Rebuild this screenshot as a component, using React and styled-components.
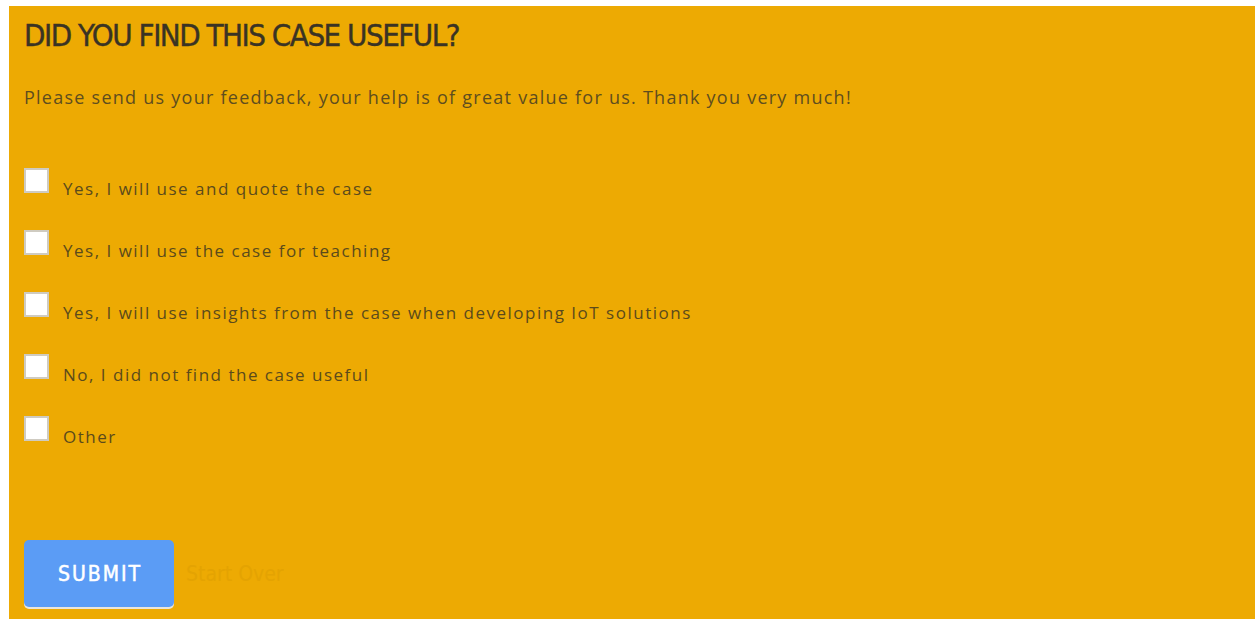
import React from "react";
import styled, { createGlobalStyle } from "styled-components";

const Global = createGlobalStyle`
  html, body { margin: 0; padding: 0; background: #ffffff; }
  body { overflow: hidden; }
  * { box-sizing: border-box; }
`;

const Panel = styled.section`
  margin: 6px 0 0 9px;
  min-height: 700px;
  background: #edaa03;
  padding: 11px 15px 0 15px;
  font-family: "Open Sans", "Liberation Sans", sans-serif;
`;

const Title = styled.h2`
  margin: 0;
  font-family: "DejaVu Sans", sans-serif;
  font-stretch: condensed;
  font-weight: 400;
  font-size: 31px;
  line-height: 37px;
  letter-spacing: -1.5px;
  color: #3a3324;
  -webkit-text-stroke: 0.4px #3a3324;
`;

const Intro = styled.p`
  margin: 32px 0 0 0;
  font-size: 18px;
  line-height: 22px;
  letter-spacing: 1.25px;
  color: #5e4d1f;
`;

const Options = styled.div`
  margin-top: 60px;
  display: flex;
  flex-direction: column;
  gap: 30px;
`;

const Option = styled.label`
  display: flex;
  align-items: flex-start;
  gap: 14px;
  cursor: pointer;
`;

const Box = styled.input.attrs({ type: "checkbox" })`
  appearance: none;
  margin: 0;
  width: 25px;
  height: 25px;
  flex: none;
  background: #ffffff;
  border: 2px solid #cfcbc1;
`;

const LabelText = styled.span`
  margin-top: 10px;
  font-size: 17px;
  line-height: 22px;
  letter-spacing: 1.5px;
  color: #5b4a1c;
`;

const Actions = styled.div`
  margin-top: 92px;
  display: flex;
  align-items: center;
  gap: 12px;
`;

const Submit = styled.button`
  width: 150px;
  height: 67px;
  border: none;
  border-radius: 5px;
  background: #5b9cf5;
  box-shadow: 0 2px 0 #e9e5dc;
  color: #ffffff;
  font-family: "DejaVu Sans", sans-serif;
  font-stretch: condensed;
  font-weight: 400;
  font-size: 21px;
  letter-spacing: 2px;
  text-indent: 2px;
  -webkit-text-stroke: 0.5px #ffffff;
  cursor: pointer;
`;

const StartOver = styled.span`
  font-family: "DejaVu Sans", sans-serif;
  font-stretch: condensed;
  font-size: 21px;
  color: #e4a302;
`;

const choices = [
  "Yes, I will use and quote the case",
  "Yes, I will use the case for teaching",
  "Yes, I will use insights from the case when developing IoT solutions",
  "No, I did not find the case useful",
  "Other",
];

export default function App() {
  return (
    <>
      <Global />
      <Panel>
        <Title>DID YOU FIND THIS CASE USEFUL?</Title>
        <Intro>
          Please send us your feedback, your help is of great value for us. Thank you very much!
        </Intro>
        <Options>
          {choices.map((c) => (
            <Option key={c}>
              <Box />
              <LabelText>{c}</LabelText>
            </Option>
          ))}
        </Options>
        <Actions>
          <Submit>SUBMIT</Submit>
          <StartOver>Start Over</StartOver>
        </Actions>
      </Panel>
    </>
  );
}
